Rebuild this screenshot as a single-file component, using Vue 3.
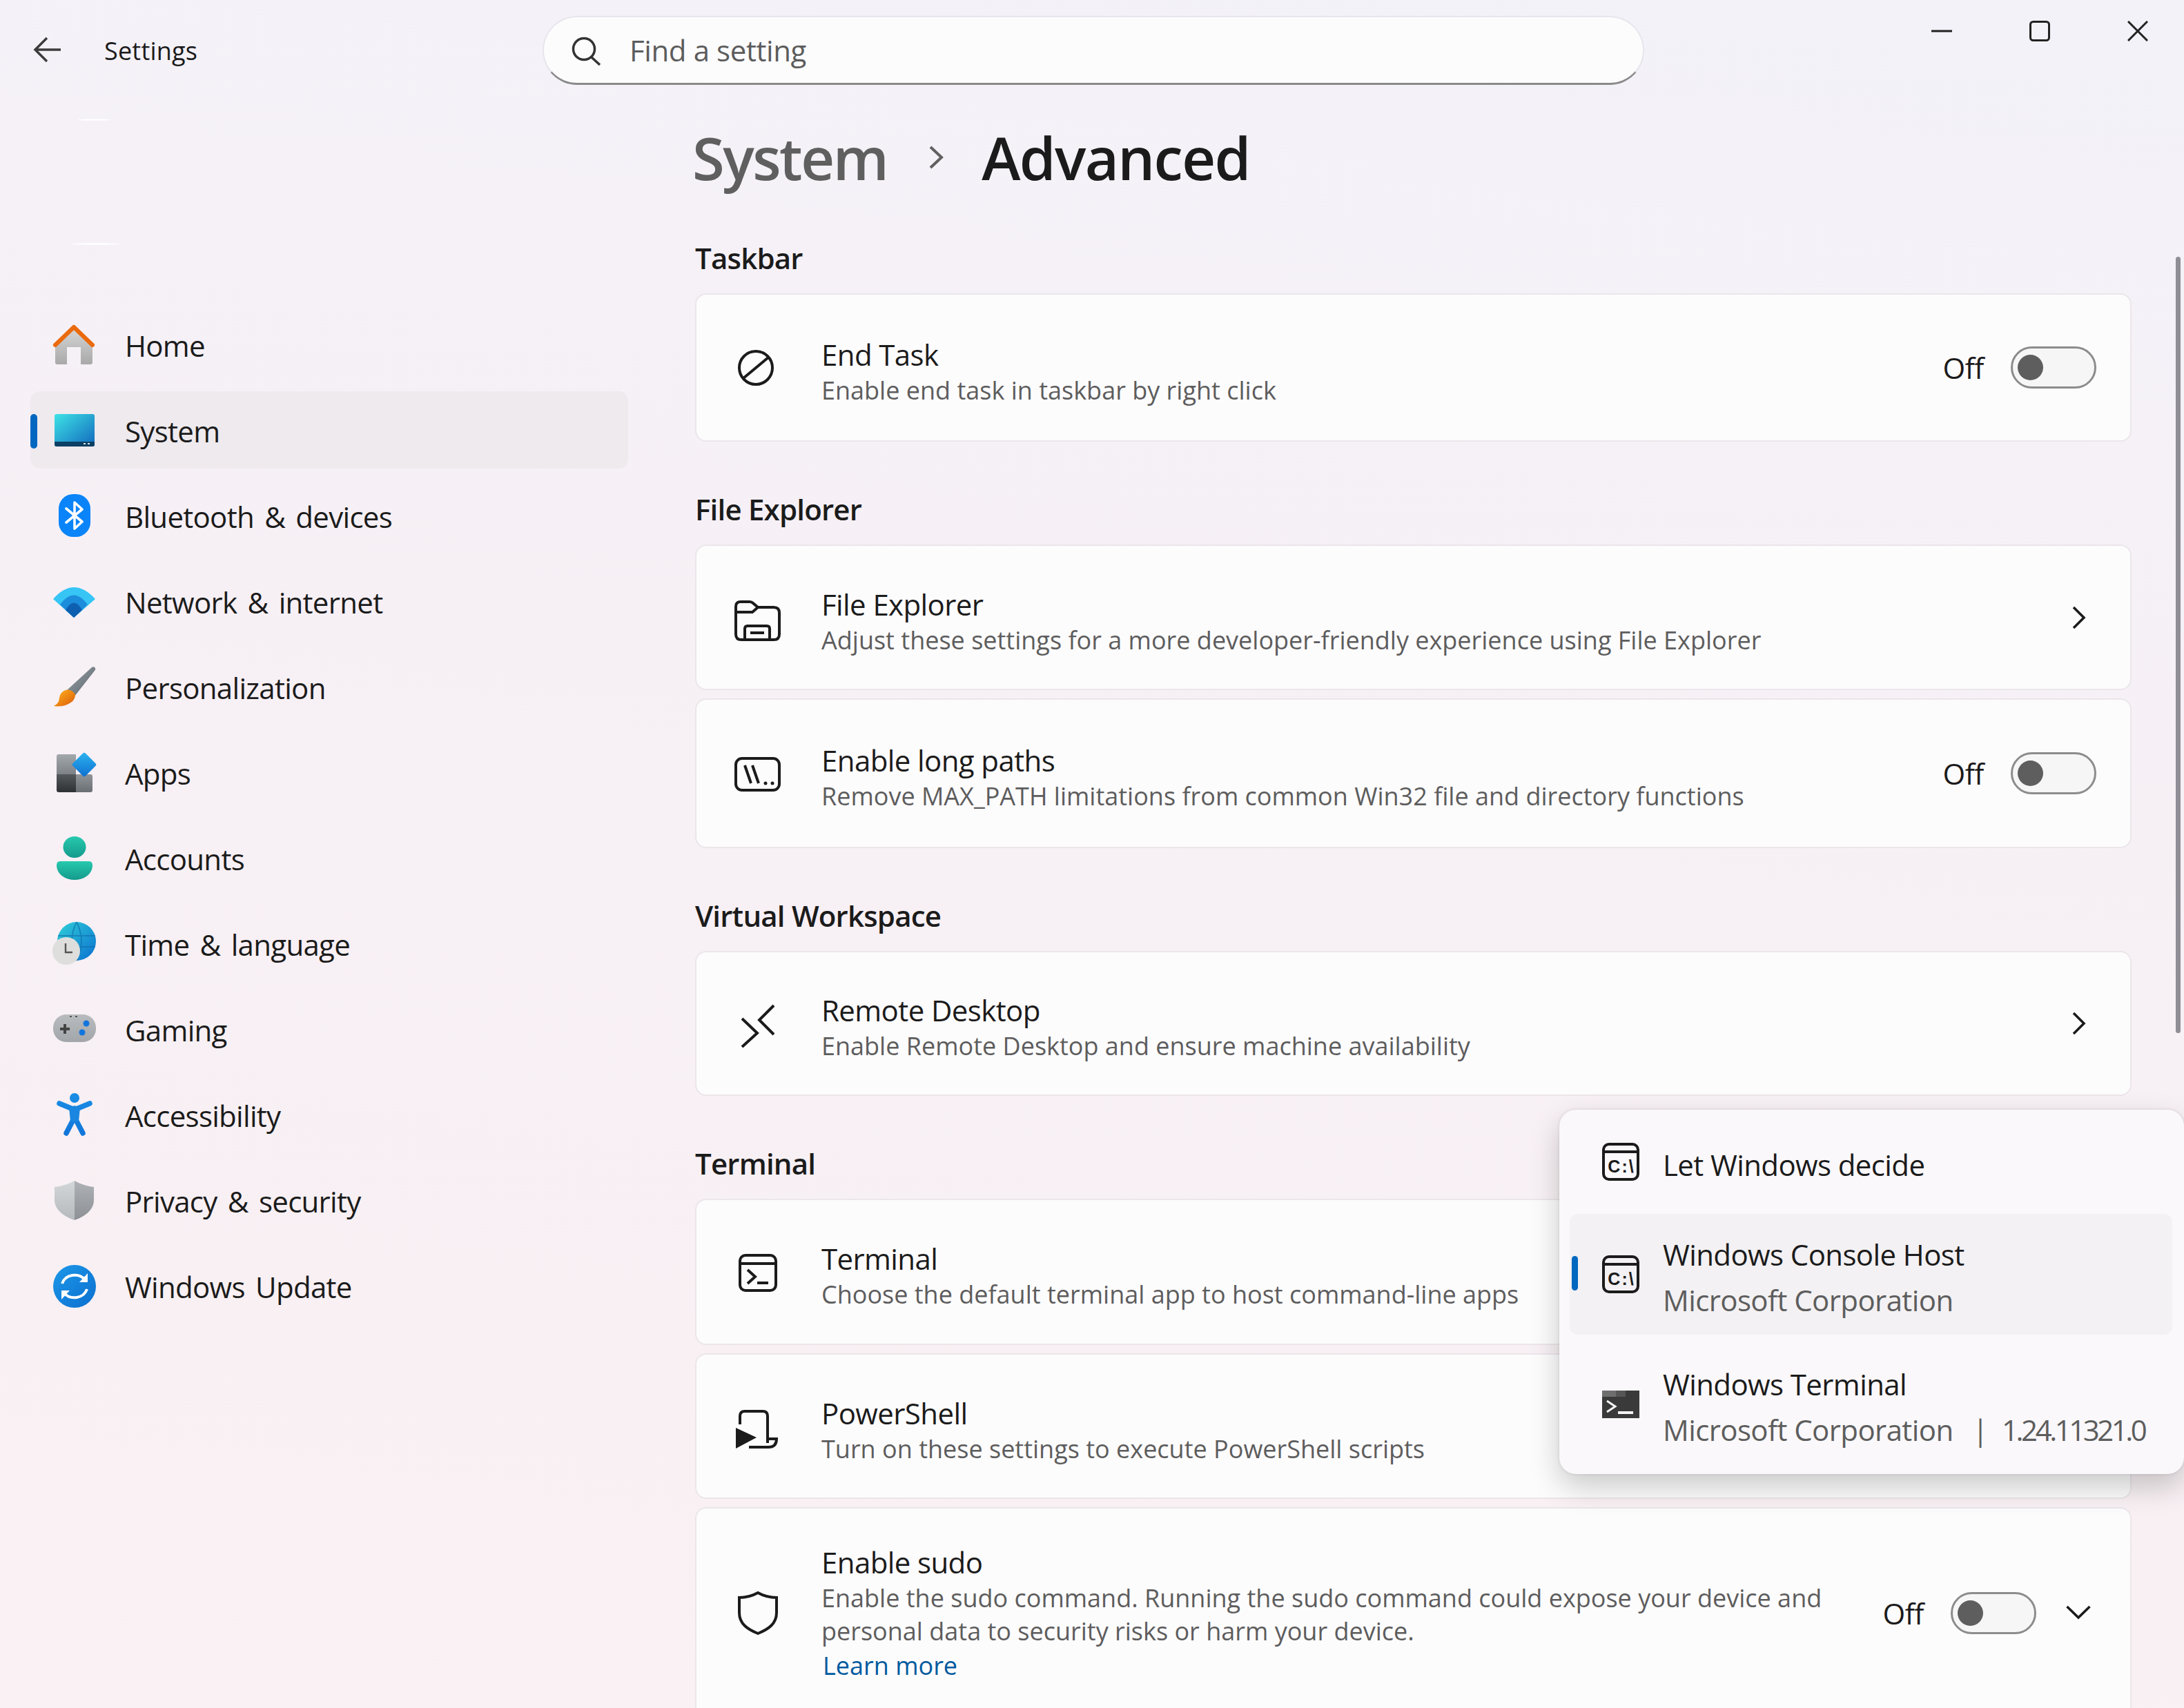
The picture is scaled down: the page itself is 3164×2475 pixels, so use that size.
<script setup>
const navItems = [
  { key: 'home', label: 'Home' },
  { key: 'system', label: 'System', active: true },
  { key: 'bluetooth', label: 'Bluetooth & devices' },
  { key: 'network', label: 'Network & internet' },
  { key: 'brush', label: 'Personalization' },
  { key: 'apps', label: 'Apps' },
  { key: 'accounts', label: 'Accounts' },
  { key: 'time', label: 'Time & language' },
  { key: 'gaming', label: 'Gaming' },
  { key: 'access', label: 'Accessibility' },
  { key: 'privacy', label: 'Privacy & security' },
  { key: 'update', label: 'Windows Update' }
]

const sections = [
  {
    title: 'Taskbar',
    cards: [
      { icon: 'end', title: 'End Task', sub: 'Enable end task in taskbar by right click', h: 215, action: 'toggle' }
    ]
  },
  {
    title: 'File Explorer',
    cards: [
      { icon: 'folder', title: 'File Explorer', sub: 'Adjust these settings for a more developer-friendly experience using File Explorer', h: 211, action: 'chevron' },
      { icon: 'paths', title: 'Enable long paths', sub: 'Remove MAX_PATH limitations from common Win32 file and directory functions', h: 217, action: 'toggle' }
    ]
  },
  {
    title: 'Virtual Workspace',
    cards: [
      { icon: 'remote', title: 'Remote Desktop', sub: 'Enable Remote Desktop and ensure machine availability', h: 210, action: 'chevron' }
    ]
  },
  {
    title: 'Terminal',
    cards: [
      { icon: 'terminal', title: 'Terminal', sub: 'Choose the default terminal app to host command-line apps', h: 212, action: 'none' },
      { icon: 'powershell', title: 'PowerShell', sub: 'Turn on these settings to execute PowerShell scripts', h: 211, action: 'none' }
    ]
  }
]
</script>

<template>
  <div class="window">
    <header class="titlebar">
      <div class="tb-left">
        <svg class="back" viewBox="0 0 50 50" width="50" height="50">
          <path d="M24 7 L7 24 L24 41 M7 24 H44" fill="none" stroke="#3c3c3c" stroke-width="3.5" />
        </svg>
        <span class="app-name">Settings</span>
      </div>
      <div class="search">
        <svg viewBox="0 0 50 50" width="50" height="50">
          <circle cx="24" cy="23" r="15.5" fill="none" stroke="#333" stroke-width="3.5" />
          <path d="M35 35 L47 46" stroke="#333" stroke-width="3.5" />
        </svg>
        <span class="search-text">Find a setting</span>
      </div>
      <div class="win-btns">
        <svg viewBox="0 0 30 30" width="30" height="30"><path d="M0 15 H30" stroke="#222" stroke-width="3" /></svg>
        <svg viewBox="0 0 30 30" width="30" height="30"><rect x="1.5" y="1.5" width="27" height="27" rx="4" fill="none" stroke="#222" stroke-width="3" /></svg>
        <svg viewBox="0 0 30 30" width="30" height="30"><path d="M1 1 L29 29 M29 1 L1 29" stroke="#222" stroke-width="3" /></svg>
      </div>
    </header>

    <div class="body">
      <aside class="sidebar">
        <div class="account">
          <div class="ghost ghost-top"></div>
          <div class="ghost ghost-bottom"></div>
        </div>
        <nav class="nav">
          <div v-for="item in navItems" :key="item.key" class="nav-item" :class="{ active: item.active }">
            <span v-if="item.active" class="nav-bar"></span>
            <svg viewBox="0 0 72 72" width="72" height="72">
              <template v-if="item.key === 'home'">
                <defs>
                  <linearGradient id="homeBody" x1="0" y1="0" x2="0" y2="1"><stop offset="0" stop-color="#d6d6d6" /><stop offset="1" stop-color="#a9a9a9" /></linearGradient>
                </defs>
                <path d="M9 36 L36 12 L63 36 V62 q0 3 -3 3 H46 V40 H26 V65 H12 q-3 0 -3 -3 Z" fill="url(#homeBody)" />
                <path d="M9 37 L36 11 L63 37" fill="none" stroke="#ea6a0c" stroke-width="6" stroke-linecap="round" stroke-linejoin="round" />
              </template>
              <template v-else-if="item.key === 'system'">
                <defs>
                  <linearGradient id="sysGrad" x1="0" y1="0" x2="1" y2="1"><stop offset="0" stop-color="#3de3e6" /><stop offset="1" stop-color="#1268bd" /></linearGradient>
                </defs>
                <rect x="8" y="13" width="58" height="47" rx="3" fill="url(#sysGrad)" />
                <path d="M8 53 H66 V57 q0 3 -3 3 H11 q-3 0 -3 -3 Z" fill="#0b3f63" />
                <rect x="50" y="55" width="3" height="2" fill="#d9e6ee" />
                <rect x="56" y="55" width="3" height="2" fill="#d9e6ee" />
              </template>
              <template v-else-if="item.key === 'bluetooth'">
                <rect x="14" y="5" width="46" height="62" rx="21" fill="#0a84f8" />
                <path d="M25 26 L48 45 L37 55 V17 L48 27 L25 46" fill="none" stroke="#fff" stroke-width="3.6" stroke-linejoin="round" stroke-linecap="round" />
              </template>
              <template v-else-if="item.key === 'network'">
                <path d="M6 33 Q36 -1 67 33 L36 60 Z" fill="#36c5f5" />
                <path d="M16 41 Q36 14 56 41 L36 60 Z" fill="#1c8ddb" />
                <path d="M24 49 Q36 28 48 49 L36 60 Z" fill="#0f5fb0" />
              </template>
              <template v-else-if="item.key === 'brush'">
                <defs>
                  <linearGradient id="brushHandle" x1="0" y1="0" x2="1" y2="1"><stop offset="0" stop-color="#9aa2a8" /><stop offset="1" stop-color="#59646b" /></linearGradient>
                  <linearGradient id="brushHair" x1="0" y1="0" x2="1" y2="1"><stop offset="0" stop-color="#ffb61c" /><stop offset="1" stop-color="#dc5a0a" /></linearGradient>
                </defs>
                <path d="M62 8 q3 -2 5 1 q1 2 -1 4 L37 50 L26 41 Z" fill="url(#brushHandle)" />
                <path d="M24 41 Q32 39 38 47 Q38 56 30 60 Q20 66 7 64 Q15 60 15 52 Q16 44 24 41 Z" fill="url(#brushHair)" />
              </template>
              <template v-else-if="item.key === 'apps'">
                <defs>
                  <linearGradient id="appsTl" x1="0" y1="0" x2="0" y2="1"><stop offset="0" stop-color="#a3a8ac" /><stop offset="1" stop-color="#7d8287" /></linearGradient>
                  <linearGradient id="appsBl" x1="0" y1="0" x2="0" y2="1"><stop offset="0" stop-color="#55595c" /><stop offset="1" stop-color="#2e3134" /></linearGradient>
                  <linearGradient id="appsBr" x1="0" y1="0" x2="0" y2="1"><stop offset="0" stop-color="#8f9499" /><stop offset="1" stop-color="#6a6f74" /></linearGradient>
                  <linearGradient id="appsDia" x1="0" y1="0" x2="1" y2="1"><stop offset="0" stop-color="#2cb4f0" /><stop offset="1" stop-color="#0f6fd0" /></linearGradient>
                </defs>
                <path d="M14 10 H39 V39 H11 V13 q0 -3 3 -3 Z" fill="url(#appsTl)" />
                <path d="M11 39 H39 V65 H14 q-3 0 -3 -3 Z" fill="url(#appsBl)" />
                <path d="M39 39 H60 q3 0 3 3 V62 q0 3 -3 3 H39 Z" fill="url(#appsBr)" />
                <rect x="38" y="12" width="26" height="26" rx="3" transform="rotate(45 51 25)" fill="url(#appsDia)" />
              </template>
              <template v-else-if="item.key === 'accounts'">
                <defs>
                  <linearGradient id="acctGrad" x1="0" y1="0" x2="0" y2="1"><stop offset="0" stop-color="#27c9ae" /><stop offset="1" stop-color="#149a8c" /></linearGradient>
                </defs>
                <ellipse cx="37" cy="20.5" rx="16.5" ry="15.5" fill="url(#acctGrad)" />
                <path d="M16 41 H58 q5 0 5 6 C63 60 50 68 37 68 C24 68 11 60 11 47 q0 -6 5 -6 Z" fill="url(#acctGrad)" />
              </template>
              <template v-else-if="item.key === 'time'">
                <defs>
                  <linearGradient id="globeGrad" x1="0" y1="0" x2="1" y2="1"><stop offset="0" stop-color="#2fd0d8" /><stop offset="1" stop-color="#0c6fd0" /></linearGradient>
                </defs>
                <circle cx="40" cy="33" r="28" fill="url(#globeGrad)" />
                <path d="M40 5 Q26 33 40 61 M40 5 Q54 33 40 61 M13 25 H67 M13 41 H67" fill="none" stroke="#0c6aa8" stroke-width="2" opacity=".55" />
                <circle cx="25" cy="47" r="20" fill="#dedfdc" />
                <path d="M24 36 V49 H34" fill="none" stroke="#555" stroke-width="2.4" />
              </template>
              <template v-else-if="item.key === 'gaming'">
                <defs>
                  <linearGradient id="padGrad" x1="0" y1="0" x2="0" y2="1"><stop offset="0" stop-color="#b9bcbf" /><stop offset="1" stop-color="#a2a5a9" /></linearGradient>
                </defs>
                <rect x="6" y="15" width="62" height="40" rx="19" fill="url(#padGrad)" />
                <path d="M23 29 V43 M16 36 H30" stroke="#444" stroke-width="4" />
                <circle cx="54" cy="28" r="4.5" fill="#1476dc" />
                <circle cx="48" cy="41" r="4.5" fill="#1476dc" />
                <rect x="30" y="17" width="3" height="2" fill="#555" />
                <rect x="38" y="17" width="3" height="2" fill="#555" />
              </template>
              <template v-else-if="item.key === 'access'">
                <defs>
                  <linearGradient id="accGrad" gradientUnits="userSpaceOnUse" x1="0" y1="0" x2="0" y2="72"><stop offset="0" stop-color="#1a8fe6" /><stop offset="1" stop-color="#1073d8" /></linearGradient>
                </defs>
                <circle cx="37" cy="12" r="7" fill="url(#accGrad)" />
                <path d="M15 20 L32 27 Q37 29 42 27 L59 20 M37 27 V42 M37 40 L25 63 M37 40 L49 63" fill="none" stroke="url(#accGrad)" stroke-width="7.5" stroke-linecap="round" />
                <path d="M29 26 H45 L43 46 H31 Z" fill="#1a86e0" />
              </template>
              <template v-else-if="item.key === 'privacy'">
                <defs>
                  <linearGradient id="shieldL" x1="0" y1="0" x2="0" y2="1"><stop offset="0" stop-color="#d3d6d9" /><stop offset="1" stop-color="#b6babd" /></linearGradient>
                  <linearGradient id="shieldR" x1="0" y1="0" x2="0" y2="1"><stop offset="0" stop-color="#aeb2b6" /><stop offset="1" stop-color="#8d9195" /></linearGradient>
                </defs>
                <path d="M37 8 C28 13 18 16 8 17 V36 C8 50 22 60 37 65 Z" fill="url(#shieldL)" />
                <path d="M37 8 C46 13 56 16 65 17 V36 C65 50 52 60 37 65 Z" fill="url(#shieldR)" />
              </template>
              <template v-else-if="item.key === 'update'">
                <defs>
                  <linearGradient id="updGrad" x1="0" y1="0" x2="1" y2="1"><stop offset="0" stop-color="#1c98e8" /><stop offset="1" stop-color="#0c6fd0" /></linearGradient>
                </defs>
                <circle cx="37" cy="37" r="31" fill="url(#updGrad)" />
                <path d="M19 33 A19 17 0 0 1 52 27" fill="none" stroke="#fff" stroke-width="4" />
                <path d="M56 18 V31 H44" fill="#fff" />
                <path d="M55 41 A19 17 0 0 1 22 47" fill="none" stroke="#fff" stroke-width="4" />
                <path d="M18 56 V43 H30" fill="#fff" />
              </template>
            </svg>
            <span class="nav-label">{{ item.label }}</span>
          </div>
        </nav>
      </aside>

      <main class="main">
        <h1 class="crumb">
          <span class="crumb-parent">System</span>
          <svg class="crumb-sep" viewBox="0 0 21 34" width="21" height="34"><path d="M2 2 L18 17 L2 32" fill="none" stroke="#606060" stroke-width="4" /></svg>
          <span class="crumb-current">Advanced</span>
        </h1>

        <section v-for="section in sections" :key="section.title" class="group">
          <h2 class="group-title">{{ section.title }}</h2>
          <div v-for="card in section.cards" :key="card.title" class="card" :style="{ height: card.h + 'px' }">
            <svg class="card-icon" viewBox="0 0 72 72" width="72" height="72" fill="none" stroke="#1b1b1b" stroke-width="4">
              <template v-if="card.icon === 'end'">
                <circle cx="34" cy="36" r="24" />
                <path d="M16 51 L52 21" />
              </template>
              <template v-else-if="card.icon === 'folder'">
                <path d="M5 20 q0 -7 7 -7 H25 q3 0 5 2 L37 21 H60 q8 0 8 8 V60 q0 8 -8 8 H13 q-8 0 -8 -8 Z" />
                <path d="M5 28 H29 L37 21" />
                <path d="M18 68 V52 q0 -4 4 -4 H50 q4 0 4 4 V68" />
                <path d="M26 58 H46" />
              </template>
              <template v-else-if="card.icon === 'paths'">
                <rect x="5" y="14" width="63" height="46" rx="9" />
                <path d="M18 24 L27 50 M29 24 L38 50" />
                <circle cx="48" cy="50" r="2.5" fill="#1b1b1b" stroke="none" />
                <circle cx="58" cy="50" r="2.5" fill="#1b1b1b" stroke="none" />
              </template>
              <template v-else-if="card.icon === 'remote'">
                <path d="M14 29 L36 50 L14 70" />
                <path d="M60 10 L39 31 L60 52" />
              </template>
              <template v-else-if="card.icon === 'terminal'">
                <rect x="11" y="12" width="52" height="51" rx="8" />
                <path d="M11 24 H63" />
                <path d="M22 33 L33 43 L22 53" />
                <path d="M36 52 H52" />
              </template>
              <template v-else-if="card.icon === 'powershell'">
                <path d="M11 33 V21 q0 -7 7 -7 H44 q7 0 7 7 V60" />
                <path d="M51 54 H64 q0 12 -12 12 H24" />
                <path d="M5 38 L35 52 L5 68 Z" fill="#1b1b1b" stroke="none" />
              </template>
            </svg>
            <div class="card-text">
              <div class="card-title">{{ card.title }}</div>
              <div class="card-sub">{{ card.sub }}</div>
            </div>
            <template v-if="card.action === 'toggle'">
              <span class="off">Off</span>
              <span class="toggle"><span class="knob"></span></span>
            </template>
            <svg v-else-if="card.action === 'chevron'" viewBox="0 0 52 52" width="52" height="52">
              <path d="M19 11 L34 26 L19 41" fill="none" stroke="#1b1b1b" stroke-width="3.6" />
            </svg>
          </div>
          <div v-if="section.title === 'Terminal'" class="card card-sudo">
            <svg class="card-icon" viewBox="0 0 72 72" width="72" height="72" fill="none" stroke="#1b1b1b" stroke-width="4">
              <path d="M37 7 C46 12 54 14 64 14 V36 C64 52 52 60 37 66 C22 60 10 52 10 36 V14 C20 14 28 12 37 7 Z" />
            </svg>
            <div class="card-text sudo-text">
              <div class="card-title sudo-title">Enable sudo</div>
              <div class="card-sub sudo-sub">Enable the sudo command. Running the sudo command could expose your device and<br />personal data to security risks or harm your device.</div>
              <div class="learn">Learn more</div>
            </div>
            <span class="off">Off</span>
            <span class="toggle"><span class="knob"></span></span>
            <svg class="sudo-chevron" viewBox="0 0 52 52" width="52" height="52">
              <path d="M9.5 17 L26 33 L42.5 17" fill="none" stroke="#1b1b1b" stroke-width="3.6" />
            </svg>
          </div>
        </section>
      </main>
    </div>

    <div class="scrollbar"></div>

    <div class="popup">
      <div class="pop-row">
        <svg viewBox="0 0 54 55" width="54" height="55">
          <rect x="2" y="2" width="50" height="51" rx="8" fill="none" stroke="#1b1b1b" stroke-width="4" />
          <path d="M2 13 H52" stroke="#1b1b1b" stroke-width="4" />
          <text x="28" y="43" text-anchor="middle" class="console-text">C:\</text>
        </svg>
        <div class="pop-text pop-one">
          <div class="pop-title">Let Windows decide</div>
        </div>
      </div>
      <div class="pop-row selected">
        <span class="pop-bar"></span>
        <svg viewBox="0 0 54 55" width="54" height="55">
          <rect x="2" y="2" width="50" height="51" rx="8" fill="none" stroke="#1b1b1b" stroke-width="4" />
          <path d="M2 13 H52" stroke="#1b1b1b" stroke-width="4" />
          <text x="28" y="43" text-anchor="middle" class="console-text">C:\</text>
        </svg>
        <div class="pop-text">
          <div class="pop-title">Windows Console Host</div>
          <div class="pop-sub">Microsoft Corporation</div>
        </div>
      </div>
      <div class="pop-row">
        <svg viewBox="0 0 54 40" width="54" height="40">
          <rect x="0" y="0" width="54" height="40" fill="#3a3a3a" />
          <rect x="0" y="0" width="20" height="9" fill="#6e6e6e" />
          <rect x="20" y="0" width="14" height="9" fill="#565656" />
          <path d="M7 15 L19 23 L7 31" fill="none" stroke="#f4f4f4" stroke-width="3" />
          <rect x="23" y="30" width="22" height="4" fill="#f4f4f4" />
        </svg>
        <div class="pop-text">
          <div class="pop-title">Windows Terminal</div>
          <div class="pop-sub">Microsoft Corporation<span class="pipe">|</span><span class="version">1.24.11321.0</span></div>
        </div>
      </div>
    </div>
  </div>
</template>

<style>
html, body {
  margin: 0;
  background: #f6f0f5;
}
</style>

<style scoped>
.window {
  position: relative;
  width: 3164px;
  height: 2475px;
  overflow: hidden;
  font-family: "Open Sans", "Noto Sans", sans-serif;
  color: #1b1b1b;
  background: linear-gradient(188deg, #f3f2f9 0%, #f5f1f7 22%, #f7f0f5 50%, #f8f0f3 78%, #f9f1f3 100%);
}

.titlebar {
  display: flex;
  align-items: flex-start;
  height: 148px;
  box-sizing: border-box;
  padding: 23px 52px 0 44px;
}
.tb-left {
  display: flex;
  align-items: center;
  gap: 57px;
  width: 742px;
  height: 100px;
}
.app-name {
  font-size: 36px;
  letter-spacing: 0.2px;
}
.search {
  display: flex;
  align-items: center;
  gap: 40px;
  width: 1596px;
  height: 100px;
  box-sizing: border-box;
  padding-left: 34px;
  background: #fcfcfd;
  border: 2px solid #e8e6ec;
  border-bottom: 3px solid #8a8a8a;
  border-radius: 50px;
}
.search-text {
  font-size: 42px;
  letter-spacing: -0.4px;
  color: #5c5c5c;
}
.win-btns {
  display: flex;
  gap: 112px;
  margin-top: 7px;
  margin-left: auto;
}

.body {
  display: flex;
}
.sidebar {
  flex: none;
  width: 1003px;
  box-sizing: border-box;
  padding-left: 44px;
}
.account {
  height: 295px;
  box-sizing: border-box;
  padding-top: 24px;
}
.ghost {
  height: 3px;
  background: #fff;
  border-radius: 50%;
  opacity: .8;
}
.ghost-top {
  width: 48px;
  margin-left: 68px;
}
.ghost-bottom {
  width: 72px;
  margin: 177px 0 0 59px;
}
.nav {
  display: flex;
  flex-direction: column;
  gap: 12px;
}
.nav-item {
  position: relative;
  display: flex;
  align-items: center;
  gap: 38px;
  width: 866px;
  height: 112px;
  box-sizing: border-box;
  padding-left: 27px;
  border-radius: 14px;
}
.nav-item.active {
  background: #eeeaee;
}
.nav-bar {
  position: absolute;
  left: 0;
  top: 33px;
  width: 10px;
  height: 50px;
  border-radius: 5px;
  background: #0067c0;
}
.nav-label {
  padding-top: 3px;
  font-size: 42px;
  letter-spacing: -0.7px;
  word-spacing: 5px;
}

.main {
  flex: 1;
  min-width: 0;
  padding-right: 76px;
}
.crumb {
  display: flex;
  align-items: center;
  height: 96px;
  margin: 32px 0 0;
  font-size: 85px;
  font-weight: 600;
  letter-spacing: -2.5px;
}
.crumb-parent {
  color: #5f5f5f;
}
.crumb-sep {
  margin: 0 55px 0 61px;
}
.crumb-current {
  color: #1b1b1b;
  letter-spacing: -1.7px;
}

.group {
  margin-left: 4px;
  margin-top: 71px;
}
.group-title {
  height: 50px;
  margin: 0 0 28px;
  font-size: 42px;
  line-height: 53px;
  font-weight: 600;
  letter-spacing: -0.8px;
}
.card {
  display: flex;
  align-items: center;
  box-sizing: border-box;
  margin-bottom: 12px;
  padding: 0 49px 0 52px;
  background: #fdfcfd;
  border: 2px solid #ebe6ea;
  border-radius: 16px;
}
.card-icon {
  flex: none;
}
.card-text {
  flex: 1;
  min-width: 0;
  margin-left: 57px;
  padding-top: 14px;
}
.card-title {
  font-size: 42px;
  line-height: 52px;
  letter-spacing: -0.6px;
}
.card-sub {
  font-size: 36px;
  line-height: 52px;
  letter-spacing: 0;
  color: #5d5d5d;
}
.card-sudo {
  height: 306px;
}
.sudo-text {
  padding-top: 3px;
}
.sudo-title {
  margin-bottom: 2px;
}
.sudo-sub {
  line-height: 48px;
}
.learn {
  margin-left: 2px;
  font-size: 36px;
  line-height: 52px;
  color: #005a9e;
}
.off {
  font-size: 42px;
  margin-right: 39px;
  letter-spacing: -0.5px;
}
.toggle {
  display: flex;
  align-items: center;
  flex: none;
  width: 124px;
  height: 61px;
  box-sizing: border-box;
  padding-left: 7px;
  background: #f7f6f7;
  border: 3px solid #8c8c8c;
  border-radius: 31px;
}
.knob {
  width: 37px;
  height: 37px;
  border-radius: 50%;
  background: #5e5e5e;
}
.sudo-chevron {
  flex: none;
  margin-left: 35px;
}

.scrollbar {
  position: absolute;
  left: 3152px;
  top: 372px;
  width: 7px;
  height: 1125px;
  border-radius: 4px;
  background: #8f8d96;
}

.popup {
  position: absolute;
  left: 2259px;
  top: 1608px;
  display: flex;
  flex-direction: column;
  gap: 13px;
  width: 905px;
  height: 528px;
  box-sizing: border-box;
  padding: 13px 17px 0 15px;
  background: #faf8fa;
  border-radius: 24px;
  box-shadow: 0 18px 44px rgba(0, 0, 0, .2), 0 0 4px rgba(0, 0, 0, .12);
}
.pop-row {
  position: relative;
  display: flex;
  align-items: center;
  gap: 34px;
  height: 175px;
  box-sizing: border-box;
  padding-left: 47px;
  border-radius: 12px;
}
.pop-row:first-child {
  height: 125px;
}
.pop-row.selected {
  background: #f3f1f3;
}
.pop-bar {
  position: absolute;
  left: 3px;
  top: 61px;
  width: 9px;
  height: 50px;
  border-radius: 5px;
  background: #0067c0;
}
.pop-text {
  padding-top: 8px;
  white-space: nowrap;
}
.pop-title {
  font-size: 42px;
  line-height: 66px;
  letter-spacing: -0.6px;
}
.pop-sub {
  font-size: 42px;
  line-height: 66px;
  letter-spacing: -0.6px;
  color: #5d5d5d;
}
.pipe {
  margin: 0 20px 0 28px;
}
.version {
  letter-spacing: -3.5px;
}
.console-text {
  font-family: "Liberation Sans", sans-serif;
  font-size: 25px;
  font-weight: 700;
  letter-spacing: 2px;
  fill: #1b1b1b;
}
</style>
